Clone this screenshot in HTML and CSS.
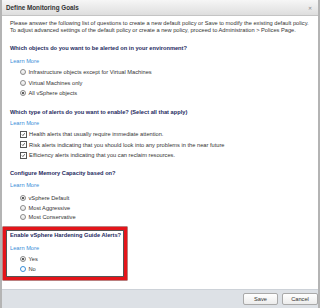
FILE: index.html
```html
<!DOCTYPE html>
<html>
<head>
<meta charset="utf-8">
<link rel="stylesheet" href="styles.css">
</head>
<body>
<div class="dialog">
  <div class="titlebar">
    <span class="title">Define Monitoring Goals</span>
    <span class="close">&#x2715;</span>
  </div>
  <div class="content">
    <p class="intro">Please answer the following list of questions to create a new default policy or Save to modify the existing default policy.<br>To adjust advanced settings of the default policy or create a new policy, proceed to Administration &gt; Polices Page.</p>

    <div class="heading h1">Which objects do you want to be alerted on in your environment?</div>
    <div class="learn">Learn More</div>
    <div class="opts">
      <div class="opt"><span class="radio"></span>Infrastructure objects except for Virtual Machines</div>
      <div class="opt"><span class="radio"></span>Virtual Machines only</div>
      <div class="opt"><span class="radio on"></span>All vSphere objects</div>
    </div>

    <div class="heading h2">Which type of alerts do you want to enable? (Select all that apply)</div>
    <div class="learn">Learn More</div>
    <div class="opts">
      <div class="opt"><span class="check"><svg viewBox="0 0 6 6" width="6" height="6"><path d="M1.2 3 L2.5 4.4 L4.9 1.3" fill="none" stroke="#222" stroke-width="0.9"/></svg></span>Health alerts that usually require immediate attention.</div>
      <div class="opt"><span class="check"><svg viewBox="0 0 6 6" width="6" height="6"><path d="M1.2 3 L2.5 4.4 L4.9 1.3" fill="none" stroke="#222" stroke-width="0.9"/></svg></span>Risk alerts indicating that you should look into any problems in the near future</div>
      <div class="opt"><span class="check"><svg viewBox="0 0 6 6" width="6" height="6"><path d="M1.2 3 L2.5 4.4 L4.9 1.3" fill="none" stroke="#222" stroke-width="0.9"/></svg></span>Efficiency alerts indicating that you can reclaim resources.</div>
    </div>

    <div class="heading h3">Configure Memory Capacity based on?</div>
    <div class="learn l3">Learn More</div>
    <div class="opts mem">
      <div class="opt"><span class="radio on"></span>vSphere Default</div>
      <div class="opt"><span class="radio"></span>Most Aggressive</div>
      <div class="opt"><span class="radio"></span>Most Conservative</div>
    </div>

    <div class="highlight">
      <div class="heading hb">Enable vSphere Hardening Guide Alerts?</div>
      <div class="learn lb">Learn More</div>
      <div class="opts yn">
        <div class="opt"><span class="radio on"></span>Yes</div>
        <div class="opt"><span class="radio focus"></span>No</div>
      </div>
    </div>
  </div>
  <div class="footer">
    <button class="btn save">Save</button>
    <button class="btn cancel">Cancel</button>
  </div>
</div>
</body>
</html>
```
FILE: styles.css
```css
html, body {
  margin: 0;
  padding: 0;
  background: #fff;
}
body {
  font-family: "Liberation Sans", Arial, sans-serif;
  font-size: 5.7px;
  color: #333;
}
.dialog {
  width: 320px;
  height: 308px;
  box-sizing: border-box;
  border-left: 2px solid #b4b4b4;
  border-right: 2px solid #b4b4b4;
  display: flex;
  flex-direction: column;
}
.titlebar {
  height: 15px;
  border-bottom: 1px solid #c4c4c4;
  background: linear-gradient(#f6f6f6, #dedede);
  display: flex;
  align-items: center;
  justify-content: space-between;
  padding: 0 6px 0 4px;
}
.title {
  font-weight: bold;
  font-size: 6.3px;
  color: #333;
}
.close {
  font-size: 5px;
  color: #888;
}
.content {
  flex: 1;
  padding: 0 8px;
}
.intro {
  margin: 4px 0 0 0;
  line-height: 7px;
}
.heading {
  font-weight: bold;
  color: #1e2a5e;
  line-height: 10px;
}
.h1 { margin-top: 9px; }
.h2 { margin-top: 8.5px; }
.h3 { margin-top: 7.5px; }
.learn {
  color: #3a8ed8;
  line-height: 10px;
  margin-top: 3px;
}
.h2 + .learn { margin-top: 1px; }
.l3 { margin-top: 2px; }
.opts { margin-top: 1px; padding-left: 10px; }
.opt {
  display: flex;
  align-items: center;
  height: 10.5px;
}
.mem { margin-top: 3px; }
.mem .opt { height: 9.8px; }
.radio {
  width: 4px;
  height: 4px;
  border: 0.6px solid #8a8a8a;
  border-radius: 50%;
  background: linear-gradient(#fdfdfd, #e2e2e2);
  margin-right: 2.5px;
  position: relative;
  flex: none;
}
.radio.on::after {
  content: "";
  position: absolute;
  left: 1.1px;
  top: 1.1px;
  width: 1.8px;
  height: 1.8px;
  border-radius: 50%;
  background: #333;
}
.radio.focus {
  border-color: #3a8ed8;
  background: #fff;
}
.check {
  width: 4.6px;
  height: 4.6px;
  border: 0.6px solid #555;
  background: #fff;
  margin-right: 2.5px;
  flex: none;
  display: flex;
  align-items: center;
  justify-content: center;
  overflow: hidden;
}
.check svg { width: 5px; height: 5px; }
.highlight {
  margin: 5px 0 0 -7px;
  width: 124px;
  box-sizing: border-box;
  border: 3px solid #e4141a;
  box-shadow: inset 0 0 0 1px #555, 0 0 0 0.5px #700;
  padding: 1px 0 3px 4px;
}
.hb { line-height: 8px; }
.lb { margin-top: 4px; }
.yn { margin-top: 1px; }
.yn .opt { height: 10px; }
.footer {
  height: 18px;
  background: #dde1e6;
  border-top: 1px solid #cdd2d8;
  display: flex;
  justify-content: flex-end;
  align-items: center;
  gap: 4px;
}
.btn {
  font-family: "Liberation Sans", Arial, sans-serif;
  font-size: 5.7px;
  color: #333;
  height: 12px;
  padding: 0;
  border: 1px solid #a9a9a9;
  border-radius: 2px;
  background: linear-gradient(#ffffff, #ececec);
}
.save { width: 35px; }
.cancel { width: 36px; }
```
